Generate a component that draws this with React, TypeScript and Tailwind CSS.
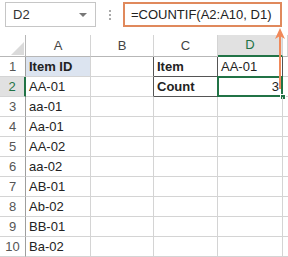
import React from 'react';

const cols = [
  { key: 'A', w: 'w-[65px]' },
  { key: 'B', w: 'w-[63px]' },
  { key: 'C', w: 'w-[64px]' },
  { key: 'D', w: 'w-[65px]' },
  { key: 'E', w: 'w-[5px]' },
];

const colA = ['Item ID', 'AA-01', 'aa-01', 'Aa-01', 'AA-02', 'aa-02', 'AB-01', 'Ab-02', 'BB-01', 'Ba-02'];

export default function App() {
  return (
    <div className="relative w-[288px] h-[257px] overflow-hidden bg-white text-[13px] text-[#222] font-['Liberation_Sans',Arial,sans-serif]">
      {/* Formula bar */}
      <div className="flex h-[35px] items-start pt-[2px]">
        <div className="ml-[5px] flex h-[25px] w-[91px] items-center justify-between border border-[#c6c6c6] pl-[7px] pr-[8px] text-[#333]">
          <span>D2</span>
          <span className="h-0 w-0 border-x-[4px] border-t-[4px] border-x-transparent border-t-[#777]" />
        </div>
        <div className="ml-[13px] mt-[8px] flex flex-col gap-[2px]">
          <span className="h-[2px] w-[2px] bg-[#aaa]" />
          <span className="h-[2px] w-[2px] bg-[#aaa]" />
          <span className="h-[2px] w-[2px] bg-[#aaa]" />
        </div>
        <div className="ml-[12px] flex h-[25px] w-[159px] items-center border-2 border-[#e0895c] pl-[6px] text-[#222]">
          =COUNTIF(A2:A10, D1)
        </div>
      </div>

      {/* Column headers */}
      <div className="flex h-[22px]">
        <div className="flex w-[26px] items-end justify-end border-r border-b border-[#b7b7b7] pr-[1px] pb-[1px]">
          <svg width="13" height="13" viewBox="0 0 13 13">
            <path d="M13 0 L13 13 L0 13 Z" fill="#dadada" />
          </svg>
        </div>
        {cols.map((c) => (
          <div
            key={c.key}
            className={`${c.w} flex items-center justify-center border-r border-[#d4d4d4] ${
              c.key === 'D'
                ? 'bg-[#e1e1e1] border-b-2 border-b-[#217346] text-[#217346]'
                : 'border-b border-b-[#b7b7b7] text-[#444]'
            }`}
          >
            {c.key !== 'E' ? c.key : ''}
          </div>
        ))}
      </div>

      {/* Rows */}
      {colA.map((a, i) => {
        const row = i + 1;
        const boxed = row <= 2;
        return (
          <div key={row} className="flex h-[20px]">
            <div
              className={`w-[26px] flex items-center justify-center border-b border-[#d4d4d4] ${
                row === 2
                  ? 'bg-[#e1e1e1] border-r-2 border-r-[#217346] text-[#217346]'
                  : 'border-r border-r-[#9e9e9e] text-[#555]'
              }`}
            >
              {row}
            </div>
            <div
              className={`w-[65px] flex items-center pl-[3px] border-r border-b border-[#d4d4d4] ${
                row === 1 ? 'bg-[#dce4f0] font-bold' : ''
              }`}
            >
              {a}
            </div>
            <div
              className={`w-[63px] border-b border-b-[#d4d4d4] border-r ${
                boxed ? 'border-r-[#555]' : 'border-r-[#d4d4d4]'
              }`}
            />
            <div
              className={`w-[64px] flex items-center pl-[3px] font-bold border-r border-b ${
                boxed ? 'border-[#555]' : 'border-[#d4d4d4]'
              }`}
            >
              {row === 1 ? 'Item' : row === 2 ? 'Count' : ''}
            </div>
            <div
              className={`relative w-[65px] flex items-center border-r border-b ${
                boxed ? 'border-[#555]' : 'border-[#d4d4d4]'
              } ${row === 2 ? 'justify-end pr-[3px]' : 'pl-[3px]'}`}
            >
              {row === 1 ? 'AA-01' : row === 2 ? '3' : ''}
              {row === 2 && (
                <>
                  <span className="absolute -left-px -top-px h-[21px] w-[66px] border-2 border-[#217346]" />
                  <span className="absolute -right-[4px] -bottom-[4px] h-[6px] w-[6px] border border-white bg-[#217346]" />
                </>
              )}
            </div>
            <div className="w-[5px] border-b border-[#d4d4d4]" />
          </div>
        );
      })}

      {/* Annotation arrow */}
      <svg className="absolute left-[274px] top-[27px]" width="12" height="62" viewBox="0 0 12 62">
        <line x1="6" y1="8" x2="6" y2="62" stroke="#f0895a" strokeWidth="2" />
        <path d="M6 1 L11 12 L6 9 L1 12 Z" fill="#f0895a" />
      </svg>
    </div>
  );
}
